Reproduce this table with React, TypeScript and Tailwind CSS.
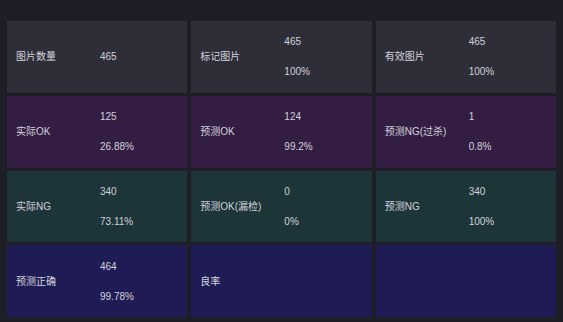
import React from "react";

type Cell = { label: string; v1?: string; v2?: string };

const rows: { bg: string; cells: Cell[] }[] = [
  {
    bg: "bg-[#2e2e38]",
    cells: [
      { label: "图片数量", v1: "465" },
      { label: "标记图片", v1: "465", v2: "100%" },
      { label: "有效图片", v1: "465", v2: "100%" },
    ],
  },
  {
    bg: "bg-[#331d42]",
    cells: [
      { label: "实际OK", v1: "125", v2: "26.88%" },
      { label: "预测OK", v1: "124", v2: "99.2%" },
      { label: "预测NG(过杀)", v1: "1", v2: "0.8%" },
    ],
  },
  {
    bg: "bg-[#1d3439]",
    cells: [
      { label: "实际NG", v1: "340", v2: "73.11%" },
      { label: "预测OK(漏检)", v1: "0", v2: "0%" },
      { label: "预测NG", v1: "340", v2: "100%" },
    ],
  },
  {
    bg: "bg-[#1f1c55]",
    cells: [
      { label: "预测正确", v1: "464", v2: "99.78%" },
      { label: "良率" },
      { label: "" },
    ],
  },
];

export default function App() {
  return (
    <div
      className="w-[563px] h-[322px] bg-[#1e1e27] px-[7px] pt-[21px] pb-[5px] text-[10px] text-[#d2d2da]"
      style={{ fontFamily: '"Liberation Sans", "Noto Sans CJK SC", sans-serif' }}
    >
      <div className="grid grid-cols-3 grid-rows-4 gap-x-[4px] gap-y-[3px] h-full">
        {rows.map((r, ri) =>
          r.cells.map((c, ci) => (
            <div key={`${ri}-${ci}`} className={`${r.bg} flex items-center pl-[9px]`}>
              <div className="w-[84px] shrink-0">{c.label}</div>
              {c.v1 !== undefined && (
                <div className="flex flex-col gap-[15px]">
                  {c.v2 !== undefined ? (
                    <>
                      <div>{c.v1}</div>
                      <div>{c.v2}</div>
                    </>
                  ) : (
                    <div>{c.v1}</div>
                  )}
                </div>
              )}
            </div>
          ))
        )}
      </div>
    </div>
  );
}
